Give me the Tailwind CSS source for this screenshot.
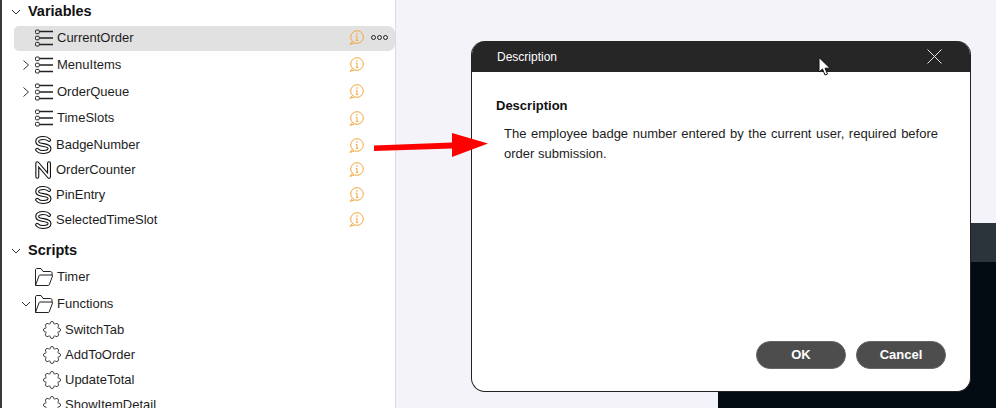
<!DOCTYPE html>
<html lang="en">
<head>
  <meta charset="UTF-8">
  <title>Description</title>
  <script src="https://cdn.jsdelivr.net/npm/@tailwindcss/browser@4"></script>
</head>
<body class="w-[996px] h-[408px] overflow-hidden bg-[#f3f3f9] font-['Liberation_Sans',Arial,sans-serif] text-[13px] text-[#1d1d1d]">
  <svg class="hidden">
    <defs>
      <symbol id="i-list" viewBox="0 0 18 18">
        <g fill="none" stroke="#222" stroke-width="1">
          <rect x="0.5" y="1" width="3.8" height="3.6" rx="1"/>
          <rect x="0.5" y="7.200" width="3.8" height="3.6" rx="1"/>
          <rect x="0.5" y="13.400" width="3.8" height="3.6" rx="1"/>
          <path d="M4.500 2.500H18M4.500 9H18M4.500 15.500H18" stroke-width="1.300"/>
        </g>
      </symbol>
      <symbol id="i-s" viewBox="0 0 18 18">
        <g fill="none" stroke-linecap="round">
          <path d="M14 4C12.800 2.700 10.800 2 8.500 2 5 2 2.200 3.200 2.200 5.500 2.200 8 4.800 8.600 8.500 9.100 12 9.600 14.500 10.200 14.500 12.600 14.500 15 11.800 16 8.500 16 5.600 16 3.400 15.200 2.200 13.800" stroke="#111" stroke-width="4"/>
          <path d="M14 4C12.800 2.700 10.800 2 8.500 2 5 2 2.200 3.200 2.200 5.500 2.200 8 4.800 8.600 8.500 9.100 12 9.600 14.500 10.200 14.500 12.600 14.500 15 11.800 16 8.500 16 5.600 16 3.400 15.200 2.200 13.800" stroke="#fff" stroke-width="1.800"/>
        </g>
      </symbol>
      <symbol id="i-n" viewBox="0 0 18 18">
        <g fill="none" stroke-linecap="round" stroke-linejoin="round">
          <path d="M2.300 15.800V2.200L14 15.800V2.200" stroke="#111" stroke-width="4"/>
          <path d="M2.300 15.800V2.200L14 15.800V2.200" stroke="#fff" stroke-width="1.800"/>
        </g>
      </symbol>
      <symbol id="i-folder" viewBox="0 0 18 18">
        <path d="M.5 17.500V2C.5 1.200 1 .5 2 .5h4l2 3h7.500c.8 0 1.500.5 1.500 1.500v2.500M.5 17.500h12.800c.4 0 .7-.2.900-.6l3.300-8.800c.2-.6-.1-1.100-.8-1.100H5c-.4 0-.7.200-.9.600L.5 17.500z" fill="none" stroke="#222" stroke-width="1"/>
      </symbol>
      <symbol id="i-func" viewBox="0 0 18 18">
        <path d="M7.080 3.100A2 2 0 1 1 10.920 3.100M11.810 3.480A2 2 0 1 1 14.520 6.190M14.900 7.080A2 2 0 1 1 14.900 10.920M14.520 11.810A2 2 0 1 1 11.810 14.520M10.920 14.900A2 2 0 1 1 7.080 14.900M6.190 14.520A2 2 0 1 1 3.480 11.810M3.100 10.920A2 2 0 1 1 3.100 7.080M3.480 6.190A2 2 0 1 1 6.190 3.480" fill="none" stroke="#222" stroke-width="1"/>
      </symbol>
      <symbol id="i-info" viewBox="0 0 15 15">
        <circle cx="8" cy="7" r="6.300" fill="none" stroke="#f3a53c" stroke-width="1"/>
        <path d="M3.500 11.500 1 14.300l4-1" fill="none" stroke="#f3a53c" stroke-width="1"/>
        <path d="M8 6.200v4M6.700 6.300H8M6.700 10.300h2.600" fill="none" stroke="#f3a53c" stroke-width="1"/>
        <circle cx="7.900" cy="4" r="0.800" fill="#f3a53c"/>
      </symbol>
      <symbol id="i-down" viewBox="0 0 10 10"><path d="M1 3l4 4 4-4" fill="none" stroke="#333" stroke-width="1"/></symbol>
      <symbol id="i-right" viewBox="0 0 10 10"><path d="M2.500.5 7.500 5l-5 4.500" fill="none" stroke="#333" stroke-width="1"/></symbol>
    </defs>
  </svg>

  <div class="relative flex w-full h-full">
    <!-- tree panel -->
    <aside class="w-[396px] h-full shrink-0 overflow-hidden bg-white border-l-2 border-r border-l-[#3a3a3a] border-r-[#dcdce0]">
      <div class="flex items-center h-[24px] pl-[9px] gap-[7px] text-[14.500px] font-bold text-[#111]">
        <svg class="w-[10px] h-[10px]"><use href="#i-down"/></svg><span>Variables</span>
      </div>

      <div class="flex items-center h-[25px] mt-[2px] ml-[12px] pl-[21px] pr-[7px] pb-[2px] rounded-l-[5px] rounded-r-[7px] bg-[#e1e1e1]">
        <svg class="w-[18px] h-[18px]"><use href="#i-list"/></svg>
        <span class="ml-[4px] flex-1">CurrentOrder</span>
        <svg class="w-[15px] h-[15px]"><use href="#i-info"/></svg>
        <span class="flex gap-[1px] ml-[7px]">
          <i class="w-[5px] h-[5px] rounded-full border-[1.500px] border-[#222]"></i><i class="w-[5px] h-[5px] rounded-full border-[1.500px] border-[#222]"></i><i class="w-[5px] h-[5px] rounded-full border-[1.500px] border-[#222]"></i>
        </span>
      </div>

      <div class="flex items-center h-[27px] pl-[19px] pr-[31px]">
        <svg class="w-[10px] h-[10px] mr-[4px]"><use href="#i-right"/></svg>
        <svg class="w-[18px] h-[18px]"><use href="#i-list"/></svg>
        <span class="ml-[4px] flex-1">MenuItems</span>
        <svg class="w-[15px] h-[15px]"><use href="#i-info"/></svg>
      </div>
      <div class="flex items-center h-[27px] pl-[19px] pr-[31px]">
        <svg class="w-[10px] h-[10px] mr-[4px]"><use href="#i-right"/></svg>
        <svg class="w-[18px] h-[18px]"><use href="#i-list"/></svg>
        <span class="ml-[4px] flex-1">OrderQueue</span>
        <svg class="w-[15px] h-[15px]"><use href="#i-info"/></svg>
      </div>
      <div class="flex items-center h-[26px] pl-[33px] pr-[31px]">
        <svg class="w-[18px] h-[18px]"><use href="#i-list"/></svg>
        <span class="ml-[4px] flex-1">TimeSlots</span>
        <svg class="w-[15px] h-[15px]"><use href="#i-info"/></svg>
      </div>
      <div class="flex items-center h-[26px] pt-[2px] pl-[33px] pr-[31px]">
        <svg class="w-[18px] h-[18px]"><use href="#i-s"/></svg>
        <span class="ml-[3px] flex-1">BadgeNumber</span>
        <svg class="w-[15px] h-[15px]"><use href="#i-info"/></svg>
      </div>
      <div class="flex items-center h-[25px] pl-[33px] pr-[31px]">
        <svg class="w-[18px] h-[18px]"><use href="#i-n"/></svg>
        <span class="ml-[3px] flex-1">OrderCounter</span>
        <svg class="w-[15px] h-[15px]"><use href="#i-info"/></svg>
      </div>
      <div class="flex items-center h-[25px] pl-[33px] pr-[31px]">
        <svg class="w-[18px] h-[18px]"><use href="#i-s"/></svg>
        <span class="ml-[3px] flex-1">PinEntry</span>
        <svg class="w-[15px] h-[15px]"><use href="#i-info"/></svg>
      </div>
      <div class="flex items-center h-[25px] pl-[33px] pr-[31px]">
        <svg class="w-[18px] h-[18px]"><use href="#i-s"/></svg>
        <span class="ml-[3px] flex-1">SelectedTimeSlot</span>
        <svg class="w-[15px] h-[15px]"><use href="#i-info"/></svg>
      </div>

      <div class="flex items-center h-[24px] mt-[7px] pl-[9px] gap-[7px] text-[14.500px] font-bold text-[#111]">
        <svg class="w-[10px] h-[10px]"><use href="#i-down"/></svg><span>Scripts</span>
      </div>
      <div class="flex items-center h-[26px] mt-[1px] pl-[33px]">
        <svg class="w-[18px] h-[18px]"><use href="#i-folder"/></svg>
        <span class="ml-[4px]">Timer</span>
      </div>
      <div class="flex items-center h-[26px] mt-[1px] pl-[19px]">
        <svg class="w-[10px] h-[10px] mr-[4px]"><use href="#i-down"/></svg>
        <svg class="w-[18px] h-[18px]"><use href="#i-folder"/></svg>
        <span class="ml-[4px]">Functions</span>
      </div>
      <div class="flex items-center h-[25px] pl-[41px]">
        <svg class="w-[18px] h-[18px]"><use href="#i-func"/></svg>
        <span class="ml-[4px]">SwitchTab</span>
      </div>
      <div class="flex items-center h-[25px] pl-[41px]">
        <svg class="w-[18px] h-[18px]"><use href="#i-func"/></svg>
        <span class="ml-[4px]">AddToOrder</span>
      </div>
      <div class="flex items-center h-[25px] pl-[41px]">
        <svg class="w-[18px] h-[18px]"><use href="#i-func"/></svg>
        <span class="ml-[4px]">UpdateTotal</span>
      </div>
      <div class="flex items-center h-[25px] pl-[41px]">
        <svg class="w-[18px] h-[18px]"><use href="#i-func"/></svg>
        <span class="ml-[4px]">ShowItemDetail</span>
      </div>
    </aside>

    <!-- right workspace, mostly behind the dialog -->
    <main class="flex-1 flex flex-col justify-end">
      <div class="ml-[322px] h-[185px] bg-[#030b13]">
        <div class="h-[39px] bg-[#2b343b]"></div>
      </div>
    </main>

    <!-- dialog -->
    <section class="absolute left-[471px] top-[41px] w-[500px] h-[351px] flex flex-col rounded-[14px] overflow-hidden bg-white border-x border-b border-[#222]">
      <header class="flex items-center justify-between h-[31px] shrink-0 pl-[25px] pr-[28px] bg-[#262626] text-white text-[12px]">
        <span>Description</span>
        <svg class="w-[15px] h-[15px]" viewBox="0 0 15 15"><path d="M.5.5l14 14M14.500.5l-14 14" fill="none" stroke="#e6e6e6" stroke-width="1"/></svg>
      </header>
      <div class="flex-1 pt-[26px] pl-[24px] pr-[32px]">
        <h2 class="text-[13px] font-bold text-[#111] leading-[16px]">Description</h2>
        <p class="mt-[10px] ml-[8px] text-[13px] leading-[20px] text-justify text-[#1d1d1d]">The employee badge number entered by the current user, required before order submission.</p>
      </div>
      <footer class="flex justify-end gap-[10px] pr-[24px] pb-[22px]">
        <button class="w-[90px] h-[28px] rounded-full bg-[#4d4d4d] border border-[#666] text-white text-[13px] font-bold">OK</button>
        <button class="w-[90px] h-[28px] rounded-full bg-[#4d4d4d] border border-[#666] text-white text-[13px] font-bold">Cancel</button>
      </footer>
    </section>

    <!-- red annotation arrow -->
    <svg class="absolute left-[372px] top-[130px] w-[118px] h-[30px]" viewBox="0 0 118 30">
      <path d="M2 15.500 80 12.500V3l36 10.500L80 27V18.500L2 21z" fill="#fe0000"/>
    </svg>

    <!-- mouse cursor -->
    <svg class="absolute left-[818px] top-[57px] w-[14px] h-[20px]" viewBox="0 0 14 20">
      <path d="M1 .5V15l3.500-3 2.500 6 2.500-1-2.500-5.800H12z" fill="#fff" stroke="#111" stroke-width="1"/>
    </svg>
  </div>
</body>
</html>
